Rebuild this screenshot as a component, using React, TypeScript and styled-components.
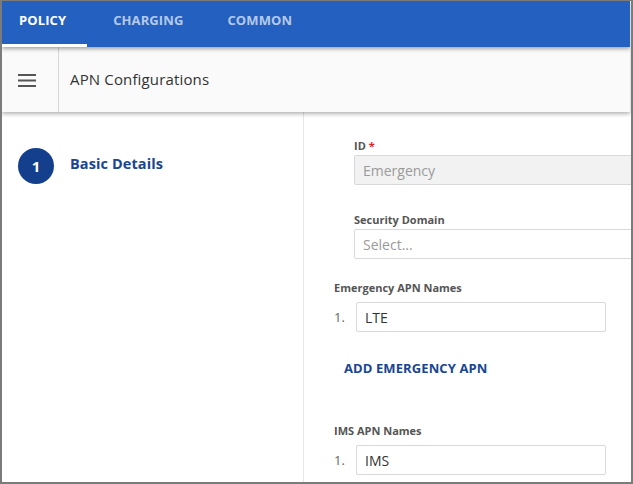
import React from "react";
import styled, { createGlobalStyle } from "styled-components";

const Global = createGlobalStyle`
  html, body { margin: 0; padding: 0; background: #fff; overflow: hidden; }
  * { box-sizing: border-box; }
  body { font-family: "Open Sans", "Noto Sans", Arial, sans-serif; }
`;

const Frame = styled.div`
  width: 633px;
  height: 484px;
  border-style: solid;
  border-color: #7b7b7b;
  border-width: 1px 2px 2px 2px;
  padding-right: 1px;
  display: flex;
  flex-direction: column;
  overflow: hidden;
  background: #fff;
`;

const Header = styled.div`
  height: 46px;
  flex: none;
  background: #2360c0;
  display: flex;
  align-items: stretch;
  position: relative;
  z-index: 3;
  box-shadow: 0 2px 4px rgba(0, 0, 0, 0.35);
`;

const Tab = styled.div<{ $active?: boolean; $pl: number; $pr: number }>`
  padding: 0 ${(p) => p.$pr}px 6px ${(p) => p.$pl}px;
  display: flex;
  align-items: center;
  font-size: 13px;
  font-weight: 700;
  letter-spacing: 0.1px;
  color: ${(p) => (p.$active ? "#ffffff" : "rgba(255,255,255,0.68)")};
  border-bottom: 3px solid ${(p) => (p.$active ? "#ffffff" : "transparent")};
`;

const Toolbar = styled.div`
  height: 65px;
  flex: none;
  background: #fafafa;
  display: flex;
  align-items: stretch;
  position: relative;
  z-index: 2;
  box-shadow: 0 2px 4px rgba(0, 0, 0, 0.3);
`;

const MenuCell = styled.div`
  width: 57px;
  border-right: 1px solid #d6d6d6;
  display: flex;
  align-items: center;
  justify-content: center;
  padding-right: 7px;
`;

const Title = styled.div`
  display: flex;
  align-items: center;
  padding-left: 11px;
  font-size: 15px;
  letter-spacing: 0.15px;
  color: #333;
  padding-bottom: 2px;
`;

const Body = styled.div`
  flex: 1;
  display: flex;
  min-height: 0;
`;

const Steps = styled.div`
  width: 302px;
  flex: none;
  border-right: 1px solid #e6e6e6;
  padding: 36px 0 0 16px;
`;

const Step = styled.div`
  display: flex;
  align-items: center;
  gap: 16px;
`;

const StepCircle = styled.div`
  width: 36px;
  height: 36px;
  border-radius: 50%;
  background: #133f8d;
  color: #fff;
  font-size: 15px;
  font-weight: 700;
  display: flex;
  align-items: center;
  justify-content: center;
`;

const StepLabel = styled.div`
  color: #1a4591;
  font-size: 14.5px;
  font-weight: 700;
  letter-spacing: 0.1px;
  margin-top: -5px;
`;

const Form = styled.div`
  flex: 1;
  min-width: 0;
  padding: 26px 0 0 30px;
  display: flex;
  flex-direction: column;
`;

const Field = styled.div<{ $indent?: number; $mt?: number; $mb?: number }>`
  margin-left: ${(p) => p.$indent ?? 0}px;
  margin-top: ${(p) => p.$mt ?? 0}px;
  margin-bottom: ${(p) => p.$mb ?? 0}px;
  display: flex;
  flex-direction: column;
`;

const Label = styled.div`
  font-size: 11px;
  font-weight: 700;
  color: #555;
  line-height: 15px;
  margin-bottom: 2px;
`;

const Star = styled.span`
  color: #d9262b;
`;

const Input = styled.div<{ $disabled?: boolean; $width: number }>`
  height: 30px;
  width: ${(p) => p.$width}px;
  border: 1px solid #d9d9d9;
  border-radius: 2px;
  background: ${(p) => (p.$disabled ? "#f2f2f2" : "#fff")};
  display: flex;
  align-items: center;
  padding-left: 8px;
  font-size: 14px;
  color: #333;
`;

const Placeholder = styled.span`
  color: #9a9a9a;
`;

const ListRow = styled.div`
  display: flex;
  align-items: center;
  margin-top: 5px;
`;

const Num = styled.span`
  width: 22px;
  font-size: 13px;
  color: #666;
`;

const AddLink = styled.div`
  margin: 27px 0 0 10px;
  color: #1a4591;
  font-size: 13px;
  font-weight: 700;
  letter-spacing: 0.1px;
`;

const Hamburger = () => (
  <svg width="18" height="14" viewBox="0 0 18 14">
    <rect x="0" y="1" width="18" height="2" fill="#555" />
    <rect x="0" y="6.5" width="18" height="2" fill="#555" />
    <rect x="0" y="12" width="18" height="2" fill="#555" />
  </svg>
);

export default function App() {
  return (
    <>
      <Global />
      <Frame>
        <Header>
          <Tab $active $pl={17} $pr={21}>POLICY</Tab>
          <Tab $pl={26} $pr={22}>CHARGING</Tab>
          <Tab $pl={22} $pr={22}>COMMON</Tab>
        </Header>
        <Toolbar>
          <MenuCell>
            <Hamburger />
          </MenuCell>
          <Title>APN Configurations</Title>
        </Toolbar>
        <Body>
          <Steps>
            <Step>
              <StepCircle>1</StepCircle>
              <StepLabel>Basic Details</StepLabel>
            </Step>
          </Steps>
          <Form>
            <Field $indent={20} $mb={27}>
              <Label>
                ID <Star>*</Star>
              </Label>
              <Input $disabled $width={320}>
                <Placeholder>Emergency</Placeholder>
              </Input>
            </Field>
            <Field $indent={20} $mb={21}>
              <Label>Security Domain</Label>
              <Input $width={320}>
                <Placeholder>Select...</Placeholder>
              </Input>
            </Field>
            <Field>
              <Label>Emergency APN Names</Label>
              <ListRow>
                <Num>1.</Num>
                <Input $width={250}>LTE</Input>
              </ListRow>
            </Field>
            <AddLink>ADD EMERGENCY APN</AddLink>
            <Field $mt={46}>
              <Label>IMS APN Names</Label>
              <ListRow>
                <Num>1.</Num>
                <Input $width={250}>IMS</Input>
              </ListRow>
            </Field>
          </Form>
        </Body>
      </Frame>
    </>
  );
}
